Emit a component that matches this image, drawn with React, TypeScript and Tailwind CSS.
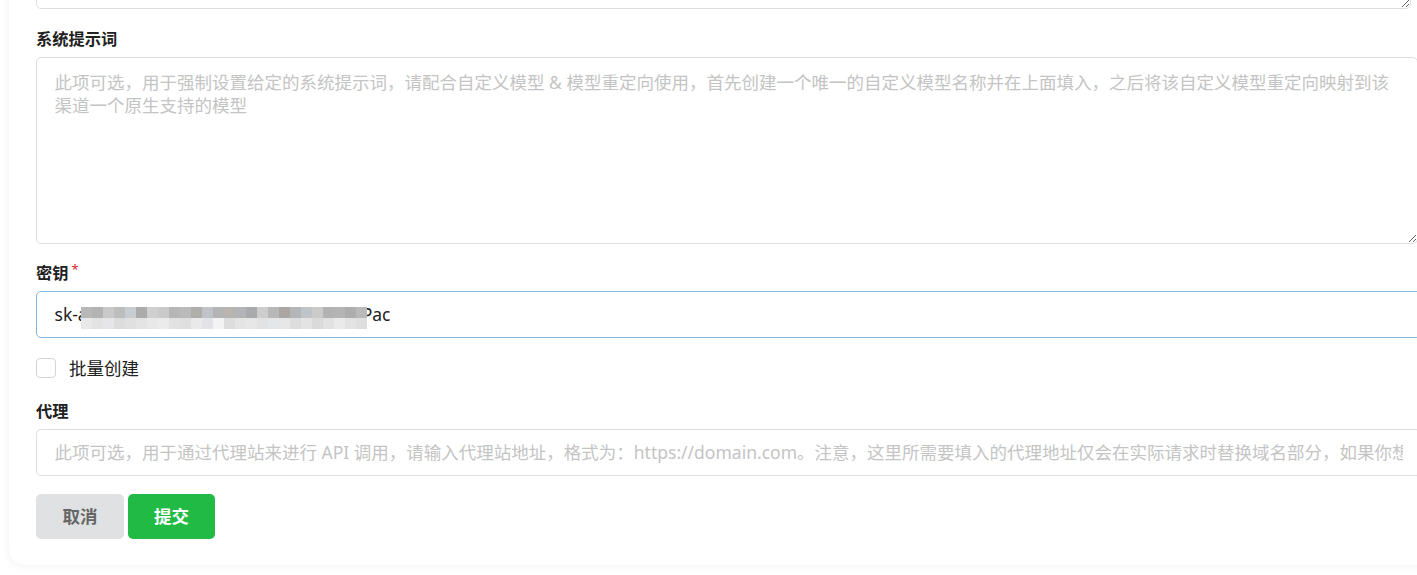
import React from 'react';

const topRow = [
  '#b8b8b8', '#b3b3b3', '#c9c9c9', '#bdbdbd', '#c8cdd1', '#ababab', '#cfcfcf', '#cacaca', '#b6b6b6',
  '#bbbbbb', '#b0aeab', '#c0c4c8', '#b4b4b4', '#b8b4b2', '#b2b4b8', '#a9aaab', '#cdcdcd', '#b8b8b8',
  '#a9a6a3', '#b3b5b7', '#c1c4c6', '#cbcbc9', '#b2b2b2', '#b4b4b4', '#adadad', '#b9b9b9',
];
const bottomRow = [
  '#e8e8e8', '#e3e3e3', '#e6e6e8', '#dcdcdc', '#e0e0e0', '#e4e4e4', '#e8e8e8', '#ebebeb', '#e2e2e2',
  '#dfdfdf', '#e9e9e9', '#e3e3e6', '#f3f3f3', '#dddddd', '#e4e4e4', '#e7e7e7', '#e2e2e2', '#e5e6e8',
  '#e7e7e7', '#dddddd', '#e3e3e3', '#dadada', '#e2e2e2', '#eaeaea', '#e3e3e3', '#dedede',
];

const Mosaic: React.FC = () => (
  <div className="relative z-10 mt-[6px] flex flex-col">
    {[topRow, bottomRow].map((row, r) => (
      <div key={r} className="flex">
        {row.map((c, i) => (
          <div key={i} className="h-[11px] w-[11px]" style={{ backgroundColor: c }} />
        ))}
      </div>
    ))}
  </div>
);

const Label: React.FC<{ text: string; required?: boolean }> = ({ text, required }) => (
  <div className="mb-[5px] flex h-[25px] items-center text-[16.25px] font-bold text-[#212121]">
    {text}
    {required && <span className="ml-[3px] -mt-[8px] text-[13px] font-normal text-[#db2828]">*</span>}
  </div>
);

const systemPromptPlaceholder =
  '此项可选，用于强制设置给定的系统提示词，请配合自定义模型 & 模型重定向使用，首先创建一个唯一的自定义模型名称并在上面填入，之后将该自定义模型重定向映射到该渠道一个原生支持的模型';

const proxyPlaceholder =
  '此项可选，用于通过代理站来进行 API 调用，请输入代理站地址，格式为：https://domain.com。注意，这里所需要填入的代理地址仅会在实际请求时替换域名部分，如果你想填入 OpenAI SDK 中所要求的 Base URL，请在末尾添加 /v1';

export default function App() {
  return (
    <div className="h-[575px] w-full overflow-hidden bg-white font-['Noto_Sans','Noto_Sans_CJK_SC',sans-serif]">
      <div className="-mt-[60px] ml-[9px] flex w-[1439px] flex-col rounded-[16px] bg-white px-[27px] pb-[26px] shadow-[0_1px_10px_rgba(0,0,0,0.06)]">
        {/* previous field, mostly scrolled out of view */}
        <textarea
          readOnly
          className="block h-[69px] w-[1375px] resize-y rounded-[5px] border border-[#dedede] bg-white outline-none"
        />

        <div className="mt-[17.5px]">
          <Label text="系统提示词" />
          <textarea
            placeholder={systemPromptPlaceholder}
            className="block h-[187px] w-[1382px] resize-y rounded-[5px] border border-[#dedede] bg-white px-[17.5px] py-[13.75px] text-[17.5px] leading-[22.5px] text-[#212121] outline-none placeholder:text-[#c4c4c4]"
          />
        </div>

        <div className="mt-[17.5px]">
          <Label text="密钥" required />
          <div className="flex h-[47px] w-[1385px] items-center rounded-[5px] border border-[#85b7d9] bg-white px-[17.5px] text-[17.5px] text-[#212121]">
            <span>sk-a</span>
            <div className="-ml-[7px]">
              <Mosaic />
            </div>
            <span className="-ml-[5px]">Pac</span>
          </div>
        </div>

        <label className="mt-[19px] flex h-[22px] items-center">
          <span className="h-[20px] w-[20px] rounded-[4px] border border-[#d4d4d5] bg-white" />
          <span className="ml-[13px] text-[17.5px] text-[#212121]">批量创建</span>
        </label>

        <div className="mt-[19.5px]">
          <Label text="代理" />
          <input
            placeholder={proxyPlaceholder}
            className="block h-[47px] w-[1385px] rounded-[5px] border border-[#dedede] bg-white px-[17.5px] text-[17.5px] text-[#212121] outline-none placeholder:text-[#c4c4c4]"
          />
        </div>

        <div className="mt-[18px] flex gap-[4px]">
          <button className="h-[45px] w-[88px] rounded-[5px] bg-[#e0e1e2] text-[17.5px] font-bold text-[#666666]">
            取消
          </button>
          <button className="h-[45px] w-[87px] rounded-[5px] bg-[#21ba45] text-[17.5px] font-bold text-white">
            提交
          </button>
        </div>
      </div>
    </div>
  );
}
